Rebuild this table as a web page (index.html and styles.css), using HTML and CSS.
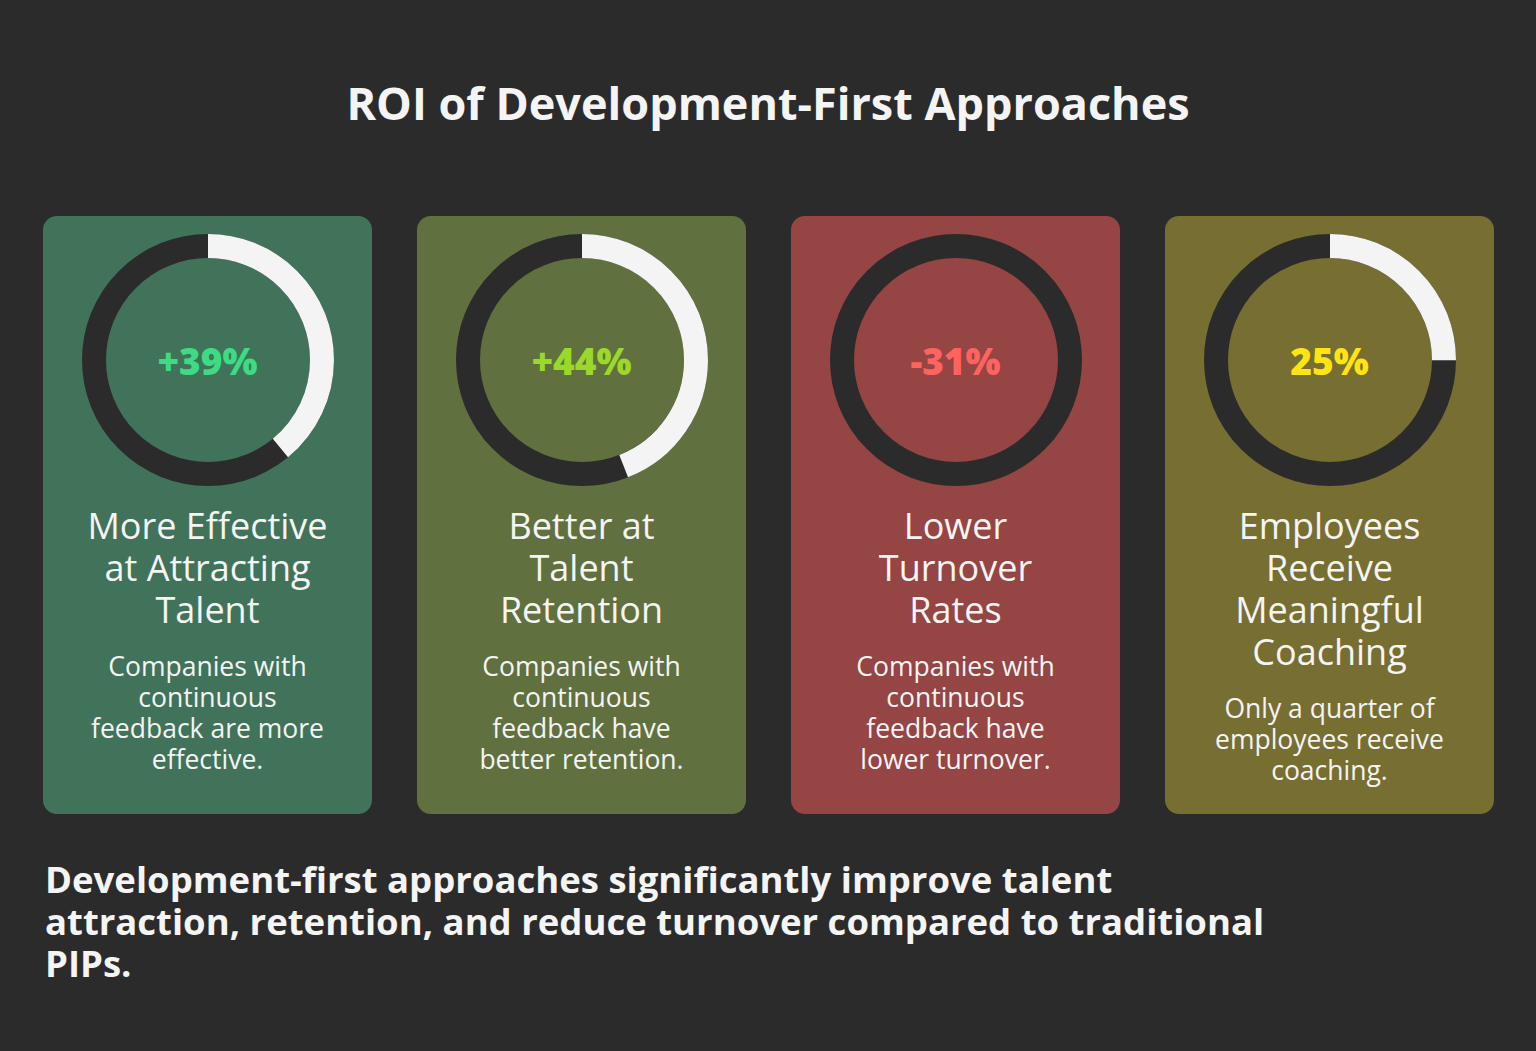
FILE: index.html
```html
<!DOCTYPE html>
<html lang="en">
<head>
<meta charset="utf-8">
<title>ROI of Development-First Approaches</title>
<link rel="stylesheet" href="styles.css">
</head>
<body>
<main class="page">
  <h1 class="title">ROI of Development-First Approaches</h1>
  <section class="cards">
    <article class="card card-green">
      <div class="ring">
        <svg class="ring-svg" viewBox="0 0 252 252" width="252" height="252">
          <circle class="ring-track" cx="126" cy="126" r="114"/>
          <circle class="ring-value" cx="126" cy="126" r="114" stroke-dasharray="279.35 716.28" transform="rotate(-90 126 126)"/>
        </svg>
        <div class="pct pct-green">+39%</div>
      </div>
      <h2 class="card-title">More Effective at Attracting Talent</h2>
      <p class="card-desc">Companies with continuous feedback are more effective.</p>
    </article>
    <article class="card card-olive">
      <div class="ring">
        <svg class="ring-svg" viewBox="0 0 252 252" width="252" height="252">
          <circle class="ring-track" cx="126" cy="126" r="114"/>
          <circle class="ring-value" cx="126" cy="126" r="114" stroke-dasharray="315.16 716.28" transform="rotate(-90 126 126)"/>
        </svg>
        <div class="pct pct-lime">+44%</div>
      </div>
      <h2 class="card-title">Better at Talent Retention</h2>
      <p class="card-desc">Companies with continuous feedback have better retention.</p>
    </article>
    <article class="card card-red">
      <div class="ring">
        <svg class="ring-svg" viewBox="0 0 252 252" width="252" height="252">
          <circle class="ring-track" cx="126" cy="126" r="114"/>
        </svg>
        <div class="pct pct-red">-31%</div>
      </div>
      <h2 class="card-title">Lower Turnover Rates</h2>
      <p class="card-desc">Companies with continuous feedback have lower turnover.</p>
    </article>
    <article class="card card-mustard">
      <div class="ring">
        <svg class="ring-svg" viewBox="0 0 252 252" width="252" height="252">
          <circle class="ring-track" cx="126" cy="126" r="114"/>
          <circle class="ring-value" cx="126" cy="126" r="114" stroke-dasharray="179.07 716.28" transform="rotate(-90 126 126)"/>
        </svg>
        <div class="pct pct-yellow">25%</div>
      </div>
      <h2 class="card-title">Employees Receive Meaningful Coaching</h2>
      <p class="card-desc">Only a quarter of employees receive coaching.</p>
    </article>
  </section>
  <p class="summary">Development-first approaches significantly improve talent attraction, retention, and reduce turnover compared to traditional PIPs.</p>
</main>
</body>
</html>
```

FILE: styles.css
```css
html, body {
  margin: 0;
  padding: 0;
  background: #2b2b2b;
}

body {
  font-family: "Open Sans", "Lato", sans-serif;
  color: #f4f4f4;
}

.page {
  width: 1450px;
  margin: 0 auto;
  padding: 74px 0 0;
  box-sizing: border-box;
}

.title {
  margin: 0;
  text-align: center;
  font-size: 45px;
  line-height: 58px;
  font-weight: 700;
  color: #f4f4f4;
}

.cards {
  margin-top: 84px;
  display: grid;
  grid-template-columns: repeat(4, 329px);
  column-gap: 45px;
}

.card {
  height: 598px;
  border-radius: 14px;
  padding: 18px 30px 0;
  box-sizing: border-box;
  display: flex;
  flex-direction: column;
  align-items: center;
  text-align: center;
}

.card-green { background: #41735a; }
.card-olive { background: #61703f; }
.card-red { background: #954543; }
.card-mustard { background: #776e32; }

.ring {
  display: grid;
  width: 252px;
  height: 252px;
  place-items: center;
}

.ring > * {
  grid-area: 1 / 1;
}

.ring-svg {
  display: block;
}

.ring-track {
  fill: none;
  stroke: #2b2b2b;
  stroke-width: 24;
}

.ring-value {
  fill: none;
  stroke: #f4f4f4;
  stroke-width: 24;
}

.pct {
  font-size: 37px;
  font-weight: 800;
}

.pct-green { color: #3ddc84; }
.pct-lime { color: #9ad82a; }
.pct-red { color: #ff6360; }
.pct-yellow { color: #ffe414; }

.card-title {
  margin: 19px 0 0;
  max-width: 248px;
  font-size: 36px;
  line-height: 42px;
  font-weight: 400;
  color: #f4f4f4;
}

.card-desc {
  margin: 20px 0 0;
  max-width: 245px;
  font-size: 26.5px;
  line-height: 31px;
  color: #f4f4f4;
}

.summary {
  margin: 44px 0 0;
  max-width: 1250px;
  padding-left: 2px;
  font-size: 36.5px;
  line-height: 42px;
  font-weight: 700;
  color: #f4f4f4;
}
```
